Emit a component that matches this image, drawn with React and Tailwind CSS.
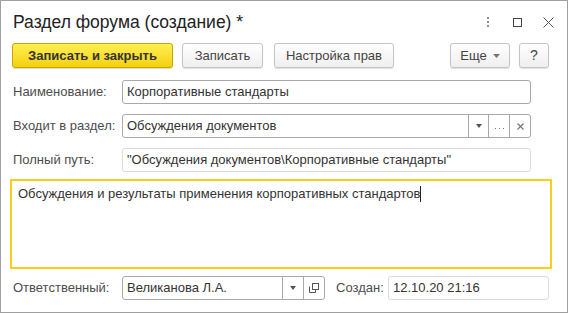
import React from "react";

const font = { fontFamily: '"Liberation Sans", Arial, sans-serif' };

function Btn({ children, className = "" }) {
  return (
    <div
      className={
        "h-[25px] flex items-center justify-center rounded-[3px] border border-[#c4c4c4] bg-gradient-to-b from-white to-[#efefef] text-[13px] text-[#444] shadow-[0_1px_1px_rgba(0,0,0,0.12)] " +
        className
      }
    >
      {children}
    </div>
  );
}

export default function App() {
  return (
    <div className="w-[569px] h-[314px] bg-white" style={font}>
      <div className="w-[568px] h-[313px] border border-[#a0a0a0] bg-white flex flex-col">
        {/* Title */}
        <div className="h-[22px] mt-[10px] flex items-center pl-[12px] pr-[13px]">
          <div className="text-[17.5px] leading-[22px] text-[#222] flex-1">
            Раздел форума (создание) *
          </div>
          <div className="flex items-center h-[22px]">
            <svg width="4" height="10" viewBox="0 0 4 10" className="mr-[23px]">
              <rect x="1" y="0" width="2" height="2" fill="#909090" />
              <rect x="1" y="4" width="2" height="2" fill="#909090" />
              <rect x="1" y="8" width="2" height="2" fill="#909090" />
            </svg>
            <svg width="9" height="9" viewBox="0 0 9 9" className="mr-[21px]">
              <rect x="0.5" y="0.5" width="8" height="8" fill="none" stroke="#444" />
            </svg>
            <svg width="11" height="11" viewBox="0 0 11 11">
              <path d="M0.5 0.5 L10.5 10.5 M10.5 0.5 L0.5 10.5" stroke="#555" strokeWidth="1" />
            </svg>
          </div>
        </div>

        {/* Toolbar */}
        <div className="flex items-center mt-[10px] pl-[11px] pr-[18px] h-[25px]">
          <div className="h-[25px] w-[161px] flex items-center justify-center rounded-[3px] border border-[#c6a600] bg-gradient-to-b from-[#fff04e] to-[#f4d000] text-[13px] font-bold text-[#333] shadow-[0_1px_1px_rgba(0,0,0,0.15)]">
            Записать и закрыть
          </div>
          <Btn className="w-[81px] ml-[9px]">Записать</Btn>
          <Btn className="w-[120px] ml-[11px]">Настройка прав</Btn>
          <div className="flex-1" />
          <Btn className="w-[60px]">
            <span>Еще</span>
            <svg width="7" height="4" viewBox="0 0 7 4" className="ml-[6px]">
              <path d="M0 0 L7 0 L3.5 4 Z" fill="#777" />
            </svg>
          </Btn>
          <Btn className="w-[30px] ml-[9px] text-[14px]">?</Btn>
        </div>

        {/* Rows */}
        <div className="flex flex-col gap-[10px] mt-[12px] pl-[12px]">
          <div className="flex items-center h-[24px]">
            <div className="w-[109px] text-[13px] text-[#4d4d4d]">Наименование:</div>
            <div className="w-[409px] h-[24px] rounded-[3px] border border-[#a9a9a9] flex items-center px-[4px] text-[13px] text-[#333]">
              Корпоративные стандарты
            </div>
          </div>
          <div className="flex items-center h-[24px]">
            <div className="w-[109px] text-[13px] text-[#4d4d4d]">Входит в раздел:</div>
            <div className="w-[409px] h-[24px] rounded-[3px] border border-[#a9a9a9] flex items-stretch text-[13px] text-[#333]">
              <div className="flex-1 flex items-center px-[4px]">Обсуждения документов</div>
              <div className="w-[20px] border-l border-[#a9a9a9] flex items-center justify-center">
                <svg width="6" height="4" viewBox="0 0 6 4">
                  <path d="M0 0 L6 0 L3 4 Z" fill="#555" />
                </svg>
              </div>
              <div className="w-[21px] border-l border-[#a9a9a9] flex items-end justify-center pb-[7px]">
                <svg width="9" height="2" viewBox="0 0 9 2">
                  <rect x="0" y="0" width="1" height="1" fill="#777" />
                  <rect x="4" y="0" width="1" height="1" fill="#777" />
                  <rect x="8" y="0" width="1" height="1" fill="#777" />
                </svg>
              </div>
              <div className="w-[21px] border-l border-[#a9a9a9] flex items-center justify-center">
                <svg width="7" height="7" viewBox="0 0 7 7">
                  <path d="M0.5 0.5 L6.5 6.5 M6.5 0.5 L0.5 6.5" stroke="#777" strokeWidth="1.2" />
                </svg>
              </div>
            </div>
          </div>
          <div className="flex items-center h-[24px]">
            <div className="w-[109px] text-[13px] text-[#4d4d4d]">Полный путь:</div>
            <div className="w-[409px] h-[24px] rounded-[3px] border border-[#dcdcdc] flex items-center px-[4px] text-[13px] text-[#333]">
              "Обсуждения документов\Корпоративные стандарты"
            </div>
          </div>
        </div>

        {/* Textarea */}
        <div className="ml-[9px] mt-[7px] w-[542px] h-[90px] border-2 border-[#f8cd1c] px-[6px] pt-[5px] text-[13px] text-[#333] leading-[16px]">
          <span>Обсуждения и результаты применения корпоративных стандартов</span>
          <span className="inline-block w-px h-[16px] bg-[#222] align-top" />
        </div>

        {/* Bottom row */}
        <div className="flex items-center h-[24px] mt-[7px] pl-[12px]">
          <div className="w-[109px] text-[13px] text-[#4d4d4d]">Ответственный:</div>
          <div className="w-[203px] h-[24px] rounded-[3px] border border-[#a9a9a9] flex items-stretch text-[13px] text-[#333]">
            <div className="flex-1 flex items-center px-[4px]">Великанова Л.А.</div>
            <div className="w-[21px] border-l border-[#a9a9a9] flex items-center justify-center">
              <svg width="6" height="4" viewBox="0 0 6 4">
                <path d="M0 0 L6 0 L3 4 Z" fill="#555" />
              </svg>
            </div>
            <div className="w-[21px] border-l border-[#a9a9a9] flex items-center justify-center">
              <svg width="10" height="10" viewBox="0 0 10 10">
                <rect x="3.5" y="0.5" width="6" height="6" fill="none" stroke="#555" />
                <path d="M0.5 3.5 V9.5 H6.5 V6.5" fill="none" stroke="#555" />
              </svg>
            </div>
          </div>
          <div className="ml-[11px] w-[52px] text-[13px] text-[#4d4d4d]">Создан:</div>
          <div className="w-[161px] h-[24px] rounded-[3px] border border-[#dcdcdc] flex items-center px-[4px] text-[13px] text-[#333]">
            12.10.20 21:16
          </div>
        </div>
      </div>
    </div>
  );
}
